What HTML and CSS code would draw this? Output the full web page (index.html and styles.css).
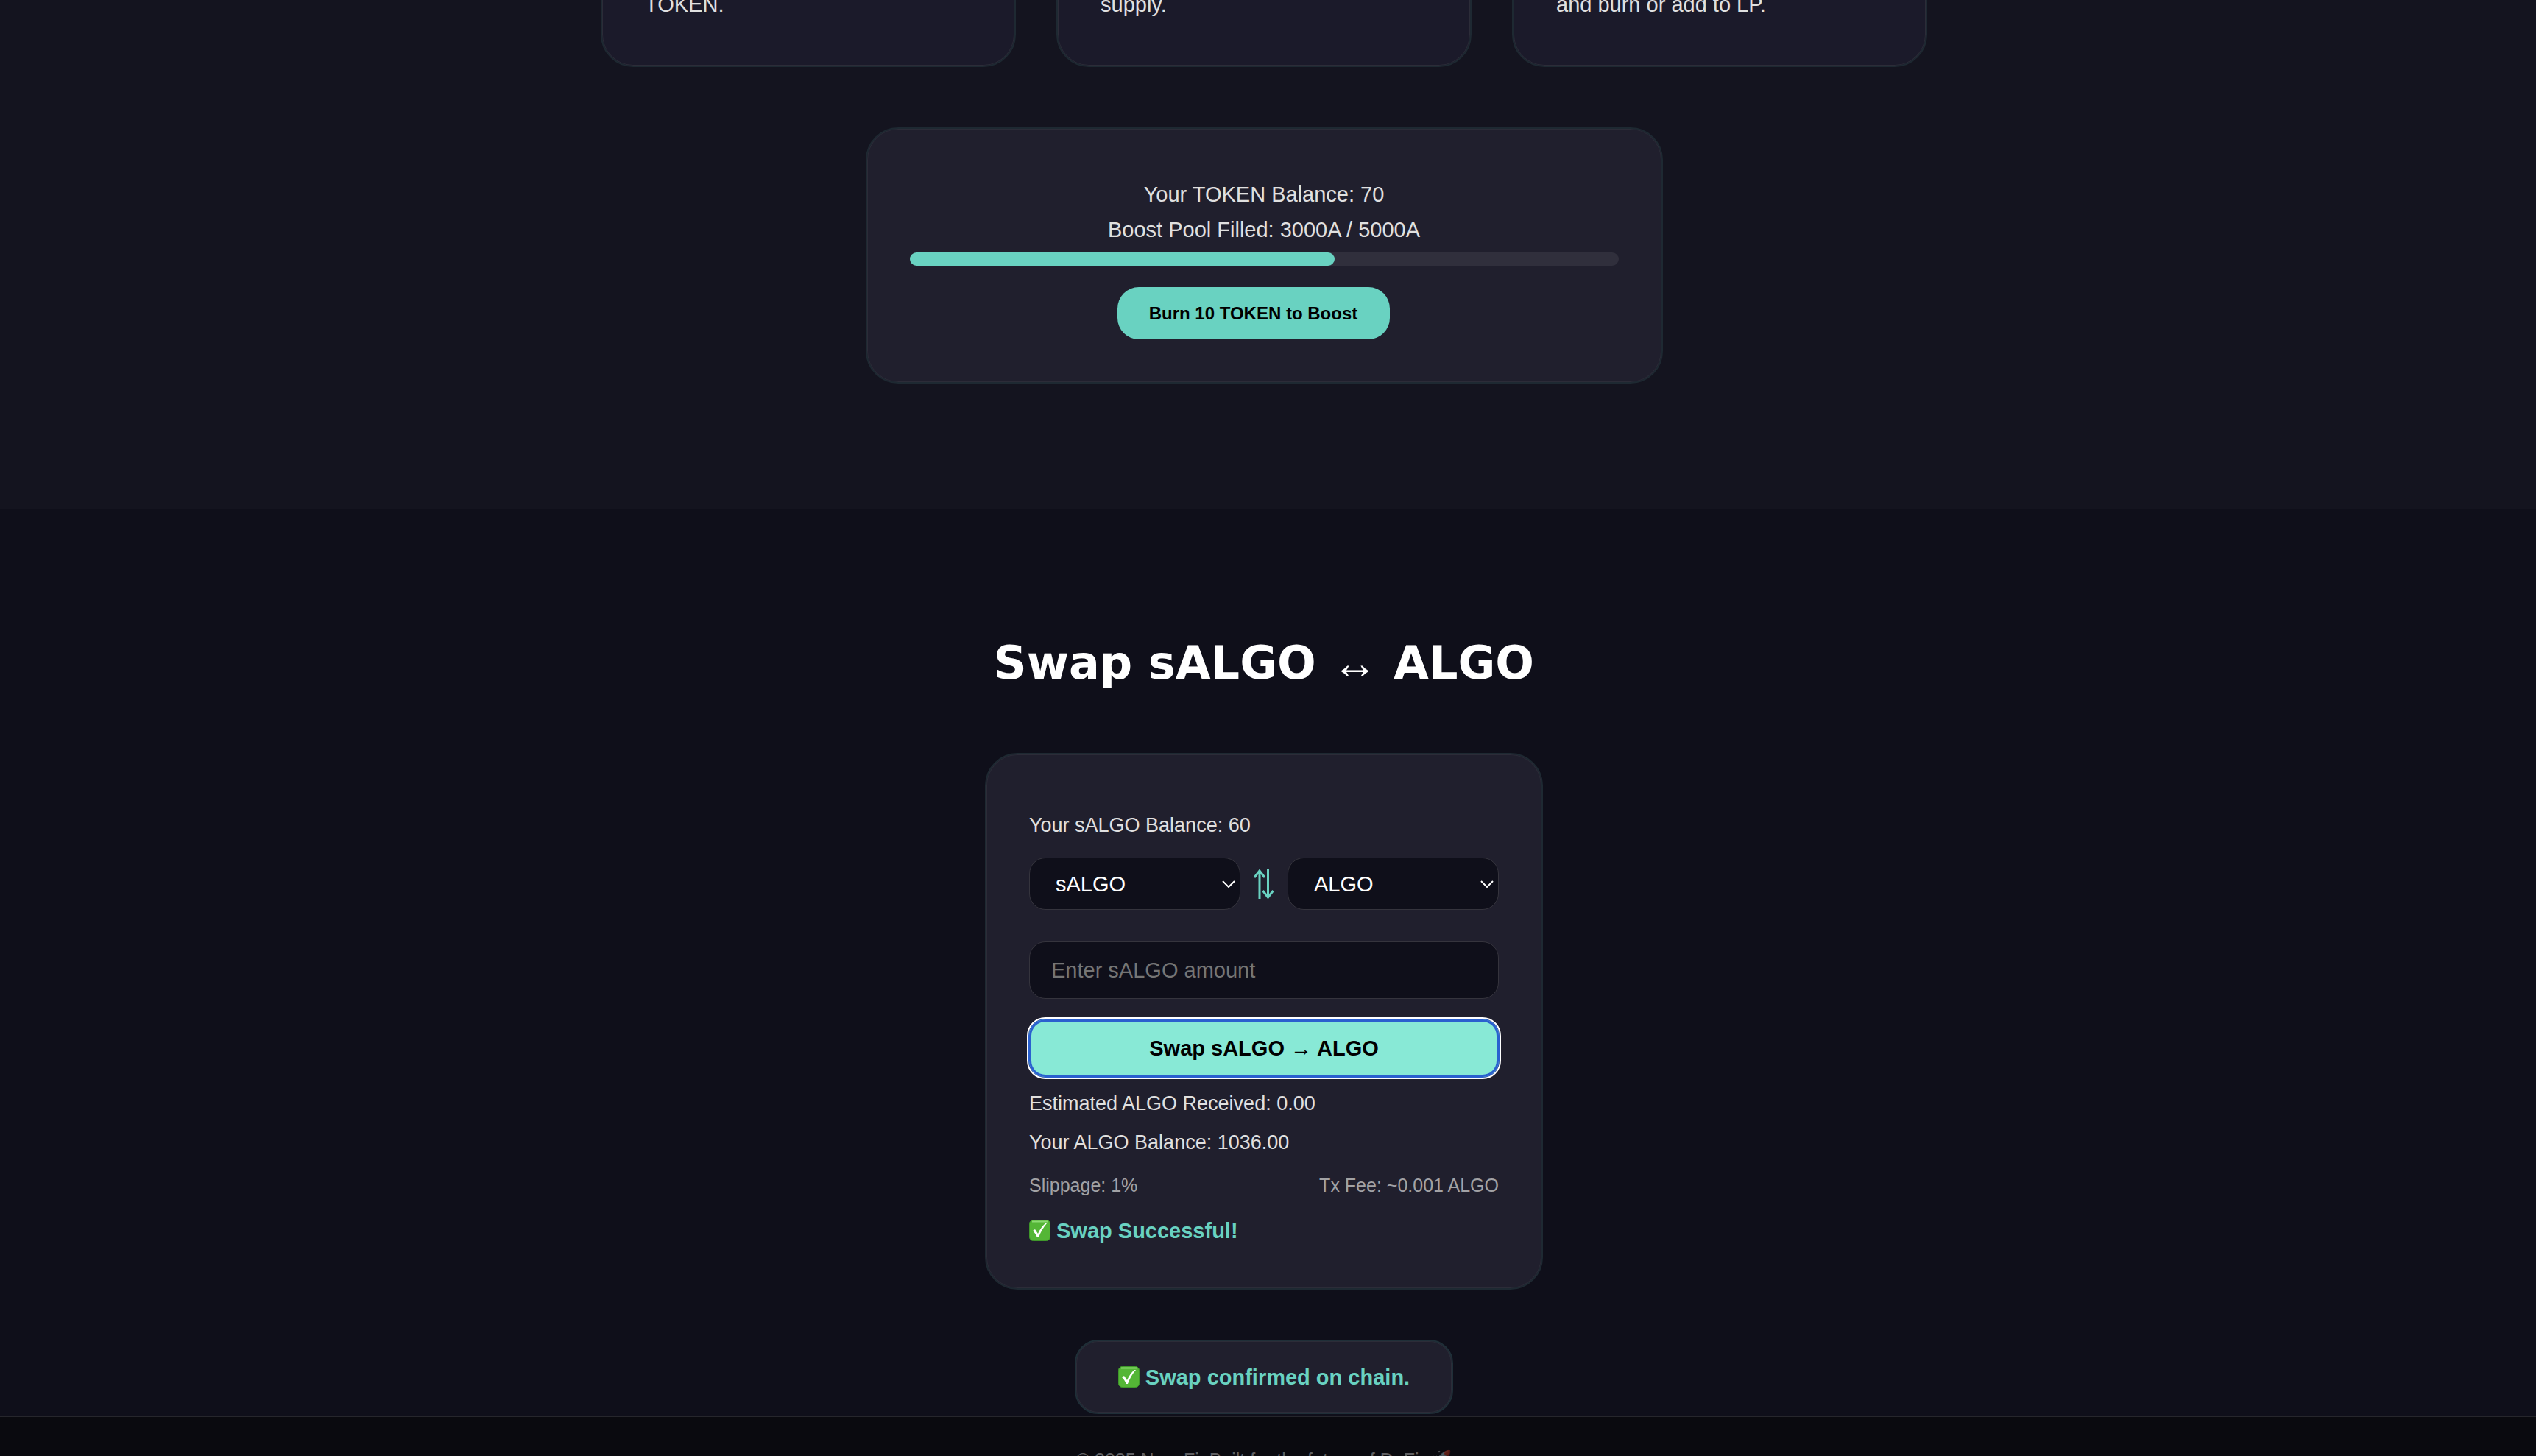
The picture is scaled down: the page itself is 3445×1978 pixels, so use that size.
FILE: index.html
```html
<!DOCTYPE html>
<html lang="en">
<head>
<meta charset="utf-8">
<title>Swap sALGO ↔ ALGO</title>
<link rel="stylesheet" href="styles.css">
</head>
<body>
<section class="boost">
  <div class="features">
    <article class="card feature"><p>TOKEN.</p></article>
    <article class="card feature"><p>supply.</p></article>
    <article class="card feature"><p>and burn or add to LP.</p></article>
  </div>
  <div class="card pool">
    <p>Your TOKEN Balance: 70</p>
    <p>Boost Pool Filled: 3000A / 5000A</p>
    <div class="track" role="progressbar" aria-label="Boost pool" aria-valuemin="0" aria-valuemax="5000" aria-valuenow="3000"><div class="fill" style="width: 60%"></div></div>
    <button class="burn" type="button">Burn 10 TOKEN to Boost</button>
  </div>
</section>
<section class="swap">
  <h2>Swap sALGO <span class="arrow">↔</span> ALGO</h2>
  <form class="card panel">
    <p class="line">Your sALGO Balance: 60</p>
    <div class="pair">
      <div class="pick">
        <select aria-label="From token"><option>sALGO</option><option>ALGO</option></select>
        <svg class="chevron" viewBox="0 0 18 10" aria-hidden="true"><path d="M1 1 9 9 17 1"/></svg>
      </div>
      <svg class="flip" viewBox="0 0 28 42" aria-hidden="true"><path d="M8 41V3M1 12 8 3 15 12M19.500 1V39M12.500 30 19.500 39 26.500 30"/></svg>
      <div class="pick">
        <select aria-label="To token"><option>ALGO</option><option>sALGO</option></select>
        <svg class="chevron" viewBox="0 0 18 10" aria-hidden="true"><path d="M1 1 9 9 17 1"/></svg>
      </div>
    </div>
    <input class="amount" type="text" aria-label="sALGO amount" placeholder="Enter sALGO amount">
    <button class="submit" type="button">Swap sALGO <span class="arrow">→</span> ALGO</button>
    <p class="line">Estimated ALGO Received: 0.00</p>
    <p class="line">Your ALGO Balance: 1036.00</p>
    <div class="fees"><span>Slippage: 1%</span><span>Tx Fee: ~0.001 ALGO</span></div>
    <p class="status"><svg class="tick" viewBox="0 0 29 29" aria-hidden="true"><rect class="tick-box" x=".5" y=".5" width="28" height="28" rx="5"/><path class="tick-shine" d="M4 2.500H25"/><path class="tick-mark" d="M5 15 8 13 12 19Q16 10 22 5L24 5Q17 13 13 24L11 24Q9 19 5 15Z"/></svg>Swap Successful!</p>
  </form>
  <p class="card toast status"><svg class="tick" viewBox="0 0 29 29" aria-hidden="true"><rect class="tick-box" x=".5" y=".5" width="28" height="28" rx="5"/><path class="tick-shine" d="M4 2.500H25"/><path class="tick-mark" d="M5 15 8 13 12 19Q16 10 22 5L24 5Q17 13 13 24L11 24Q9 19 5 15Z"/></svg>Swap confirmed on chain.</p>
</section>
<footer class="footer"><p class="legal">© 2025 NovaFi. Built for the future of DeFi. 🚀</p></footer>
</body>
</html>
```
FILE: styles.css
```css
* { box-sizing: border-box; }
html { overflow: hidden; }
body {
  margin: 0;
  padding-right: 11px;
  background: #0f0f1a;
  color: #e0e0e0;
  font: 29px/48px "Liberation Sans", Arial, sans-serif;
}
p, h2 { margin: 0; }
button, select, input { font-family: inherit; }
.boost {
  margin-right: -11px;
  padding: 0 11px 171px 0;
  background: #14141f;
  display: flex;
  flex-direction: column;
  align-items: center;
  gap: 82px;
}
.features {
  display: grid;
  grid-template-columns: repeat(3, 564px);
  gap: 55px;
}
.card {
  border: 2px solid #1e2932;
  border-radius: 44px;
  background: #201f2d;
  box-shadow: inset 0 0 0 1px #2c2c38;
}
.feature {
  margin-top: -70px;
  padding: 50px 58px 59px;
  background: #1b1a2a;
}
.pool {
  width: 1083px;
  padding: 65px 58px 58px;
  text-align: center;
}
.track {
  height: 18px;
  margin-top: 7px;
  border-radius: 9px;
  background: #302f3c;
}
.fill { height: 100%; border-radius: 9px; background: #69d2c1; }
.burn {
  display: block;
  width: 370px;
  height: 71px;
  margin: 29px auto 0 282px;
  border: 0;
  border-radius: 29px;
  background: #69d2c1;
  color: #000;
  font-size: 24px;
  font-weight: 700;
}
.swap {
  display: flex;
  flex-direction: column;
  align-items: center;
  padding-top: 173px;
}
h2 {
  color: #fff;
  font: 700 62px/72px "DejaVu Sans", sans-serif;
  margin-bottom: 86px;
}
h2 .arrow { font-weight: 400; font-family: "Liberation Sans", sans-serif; }
.panel {
  display: flex;
  flex-direction: column;
  width: 758px;
  padding: 70px 58px 54px;
}
.line { font-size: 27px; line-height: 53px; }
.pair {
  display: flex;
  align-items: center;
  justify-content: space-between;
  margin-top: 17px;
}
.pick { position: relative; width: 287px; }
select, .amount {
  width: 100%;
  border: 1px solid #35343d;
  border-radius: 22px;
  background: #0f0f1a;
  color: #fff;
  font-size: 29px;
}
select { display: block; appearance: none; height: 71px; padding: 0 35px; }
.chevron {
  position: absolute;
  right: 7px;
  top: 31px;
  width: 18px;
  height: 10px;
  pointer-events: none;
}
.chevron path { fill: none; stroke: #fff; stroke-width: 2; }
.flip { width: 28px; height: 42px; }
.flip path { fill: none; stroke: #69d2c1; stroke-width: 3; }
.amount { height: 78px; margin: 43px 0 28px; padding: 0 29px; }
.amount::placeholder { color: #757575; opacity: 1; }
.submit {
  height: 78px;
  margin-bottom: 10px;
  border: 0;
  border-radius: 22px;
  background: #88e9d6;
  color: #000;
  font-size: 29px;
  font-weight: 700;
  outline: 2px solid #fff;
  outline-offset: 1px;
  box-shadow: 0 0 0 1px #2a60cf, inset 0 0 0 3px #2a60cf;
}
.fees {
  display: flex;
  justify-content: space-between;
  margin-top: 10px;
  color: #a2a2a5;
  font-size: 25px;
  line-height: 42px;
}
.status { color: #69d2c1; font-weight: 700; }
.panel .status { margin-top: 17px; }
.tick { width: 29px; height: 29px; margin-right: 8px; vertical-align: -4px; }
.tick-box { fill: #54b636; stroke: #3f982a; }
.tick-shine { fill: none; stroke: #8cda73; stroke-width: 2; }
.tick-mark { fill: #fff; }
.toast {
  margin-top: 68px;
  padding: 25px 57px 24px;
  border-radius: 32px;
  border-color: #1f2f38;
}
.footer {
  margin: 3px -11px 0 0;
  padding: 38px 11px 40px 0;
  border-top: 1px solid #26262c;
  background: #0a0a0f;
  text-align: center;
}
.legal { font-size: 25px; line-height: 40px; opacity: .4; }
```
